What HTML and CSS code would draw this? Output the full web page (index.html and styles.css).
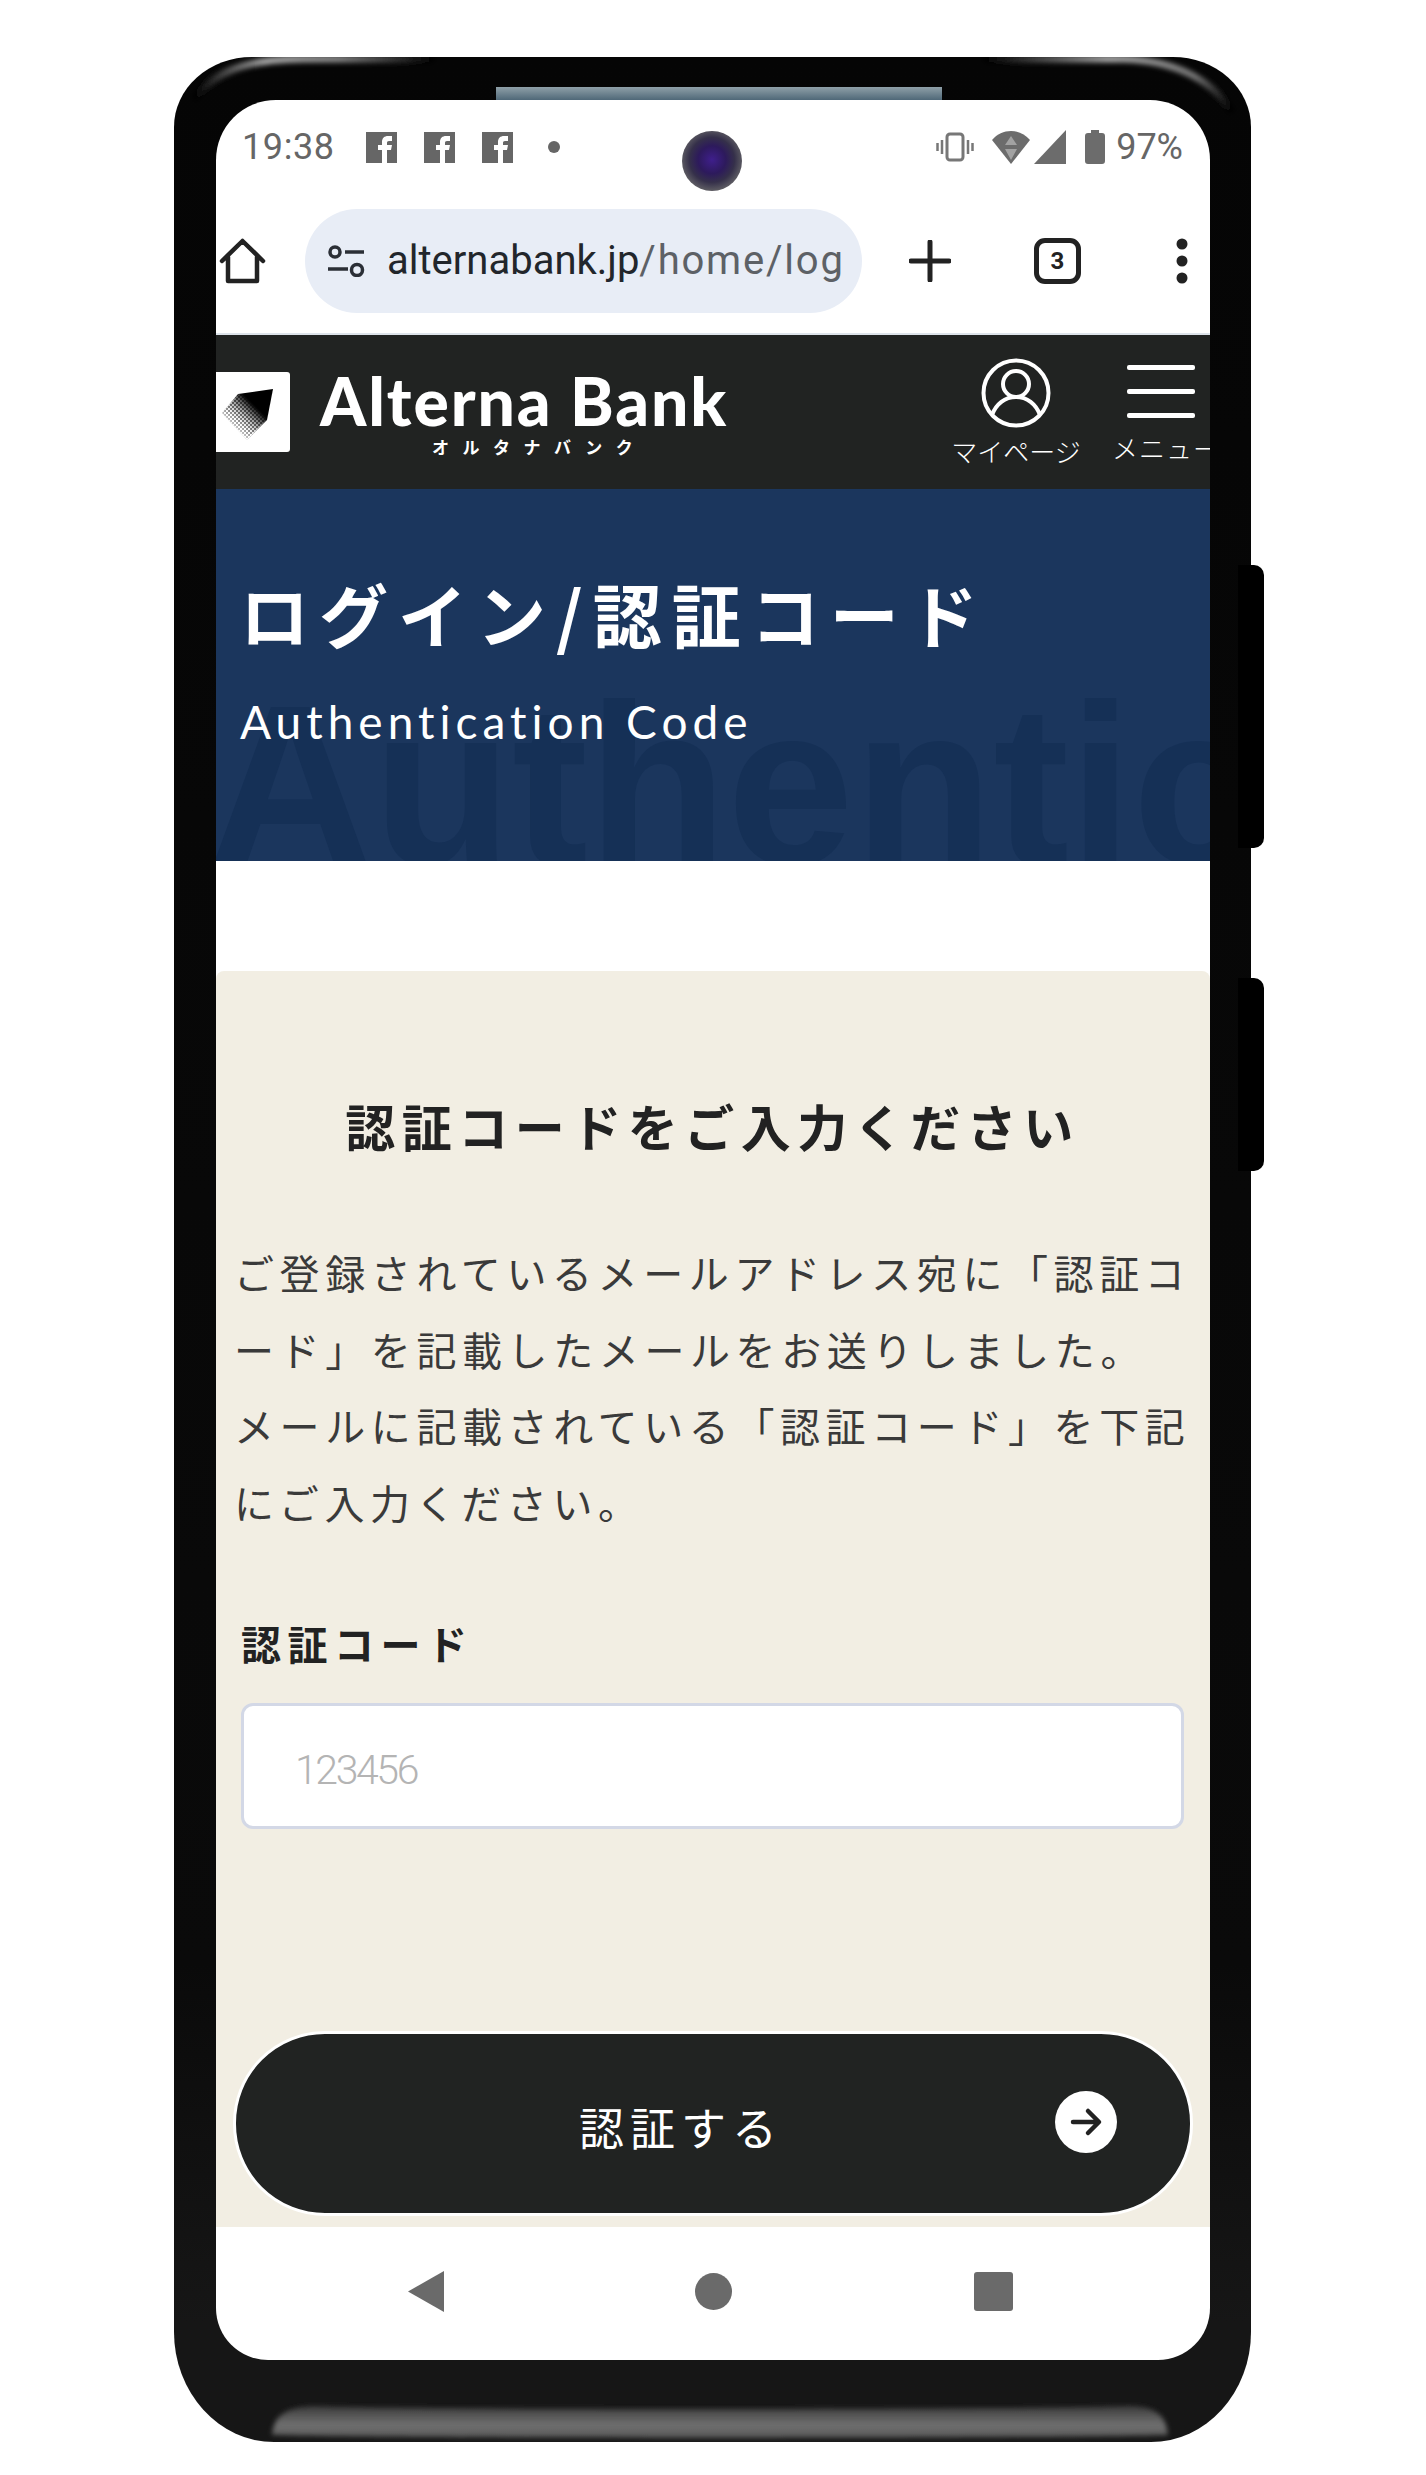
FILE: index.html
```
<!DOCTYPE html>
<html lang="ja">
<head>
<meta charset="utf-8">
<title>Alterna Bank 認証コード</title>
<link rel="stylesheet" href="styles.css">
</head>
<body>
<div class="phone">
  <svg class="sheen" width="1077" height="2385" viewBox="0 0 1077 2385" aria-hidden="true">
    <defs>
      <linearGradient id="sl" x1="0" x2="1" y1="0" y2="0"><stop offset="0" stop-color="#000"/><stop offset=".3" stop-color="#aaa"/><stop offset=".6" stop-color="#888"/><stop offset="1" stop-color="#000"/></linearGradient>
      <linearGradient id="sr" x1="0" x2="1" y1="0" y2="0"><stop offset="0" stop-color="#000"/><stop offset=".5" stop-color="#aaa"/><stop offset=".85" stop-color="#777"/><stop offset="1" stop-color="#000"/></linearGradient>
      <linearGradient id="strip" x1="0" x2="0" y1="0" y2="1"><stop offset="0" stop-color="#8fa0a8"/><stop offset="1" stop-color="#4f6878"/></linearGradient>
      <linearGradient id="band" x1="0" x2="0" y1="0" y2="1"><stop offset="0" stop-color="#3a3a3a"/><stop offset=".6" stop-color="#707070"/><stop offset="1" stop-color="#555"/></linearGradient>
      <filter id="soft"><feGaussianBlur stdDeviation="2.500"/></filter>
    </defs>
    <path d="M20 42C40 15 70 2 130 2H260" fill="none" stroke="url(#sl)" stroke-width="7" filter="url(#soft)"/>
    <path d="M810 2H950C1005 4 1040 25 1058 55" fill="none" stroke="url(#sr)" stroke-width="7" filter="url(#soft)"/>
    <rect x="322" y="30" width="446" height="13" fill="url(#strip)"/>
    <path d="M98 2378C100 2358 112 2350 140 2349C240 2353 860 2353 950 2349C982 2348 992 2358 994 2378C900 2382 180 2382 98 2378Z" fill="url(#band)" filter="url(#soft)"/>
  </svg>
  <div class="btn-side btn-side-a"></div>
  <div class="btn-side btn-side-b"></div>
  <div class="camera"></div>

  <main class="screen">
    <div class="status">
      <span class="status-time">19:38</span>
      <div class="status-apps">
        <svg class="fb" viewBox="0 0 31 31"><rect width="31" height="31" fill="#666"/><path d="M16 31V18h-4v-5h4v-3c0-4 2.500-6 6-6h4v5h-3c-1.500 0-2 .7-2 2v2h5l-1 5h-4v13z" fill="#fff"/></svg>
        <svg class="fb" viewBox="0 0 31 31"><rect width="31" height="31" fill="#666"/><path d="M16 31V18h-4v-5h4v-3c0-4 2.500-6 6-6h4v5h-3c-1.500 0-2 .7-2 2v2h5l-1 5h-4v13z" fill="#fff"/></svg>
        <svg class="fb" viewBox="0 0 31 31"><rect width="31" height="31" fill="#666"/><path d="M16 31V18h-4v-5h4v-3c0-4 2.500-6 6-6h4v5h-3c-1.500 0-2 .7-2 2v2h5l-1 5h-4v13z" fill="#fff"/></svg>
        <span class="status-dot"></span>
      </div>
      <div class="status-right">
        <svg width="38" height="30" viewBox="0 0 38 30"><rect x="11" y="2" width="16" height="26" rx="3" fill="none" stroke="#777" stroke-width="3"/><path d="M6 8v14M1.500 11v8M32 8v14M36.500 11v8" stroke="#777" stroke-width="2.500" fill="none"/></svg>
        <svg class="ic-wifi" width="38" height="34" viewBox="0 0 38 34"><path d="M19 34L0 10C5 4 12 1 19 1s14 3 19 9z" fill="#6c6c6c"/><path d="M19 6l6 9H13zM19 30l-6-11h12z" fill="#a2a2a2"/></svg>
        <svg class="ic-signal" width="32" height="34" viewBox="0 0 32 34"><path d="M32 0v34H0z" fill="#6c6c6c"/></svg>
        <svg class="ic-batt" width="20" height="34" viewBox="0 0 20 34"><path d="M6 0h8v3h3c2 0 3 1 3 3v25c0 2-1 3-3 3H3c-2 0-3-1-3-3V6c0-2 1-3 3-3h3z" fill="#6c6c6c"/></svg>
        <span class="status-pct">97%</span>
      </div>
    </div>

    <div class="urlrow">
      <svg class="ic-home" width="47" height="46" viewBox="0 0 47 46"><path d="M3 23L23.500 3 44 23M9 19v24h29V19" fill="none" stroke="#222" stroke-width="4.500" stroke-linejoin="round" stroke-linecap="round"/></svg>
      <div class="pill">
        <svg width="38" height="32" viewBox="0 0 38 32"><circle cx="8" cy="7" r="5" fill="none" stroke="#2b2f36" stroke-width="3.500"/><path d="M18 7h19M1 24h20" stroke="#2b2f36" stroke-width="3.500"/><circle cx="30" cy="25" r="5.500" fill="none" stroke="#2b2f36" stroke-width="3.500"/></svg>
        <span class="pill-url"><b class="pill-host">alternabank.jp</b><span class="pill-path">/home/log</span></span>
      </div>
      <svg class="ic-plus" width="42" height="42" viewBox="0 0 42 42"><path d="M21 2v38M2 21h38" stroke="#222" stroke-width="5" stroke-linecap="round"/></svg>
      <div class="tabs">3</div>
      <svg class="ic-more" width="12" height="46" viewBox="0 0 12 46"><circle cx="6" cy="6" r="5.500" fill="#222"/><circle cx="6" cy="23" r="5.500" fill="#222"/><circle cx="6" cy="40" r="5.500" fill="#222"/></svg>
    </div>

    <header class="site-head">
      <div class="logo-mark">
        <svg width="74" height="80" viewBox="0 0 74 80">
          <defs>
            <linearGradient id="mk" gradientUnits="userSpaceOnUse" x1="57" y1="17" x2="14" y2="60"><stop offset=".4" stop-color="#000"/><stop offset=".72" stop-color="#777"/><stop offset="1" stop-color="#fff"/></linearGradient>
            <linearGradient id="fd" gradientUnits="userSpaceOnUse" x1="57" y1="17" x2="14" y2="60"><stop offset=".42" stop-color="#000"/><stop offset=".8" stop-color="#fff"/></linearGradient>
            <mask id="fm"><rect width="74" height="80" fill="url(#fd)"/></mask>
            <pattern id="ck" width="4" height="4" patternUnits="userSpaceOnUse"><rect width="2" height="2" fill="#fff"/><rect x="2" y="2" width="2" height="2" fill="#fff"/></pattern>
          </defs>
          <path d="M57 17L51 48 31 68 6 41 22 22z" fill="url(#mk)"/>
          <path d="M57 17L51 48 31 68 6 41 22 22z" fill="url(#ck)" mask="url(#fm)"/>
        </svg>
      </div>
      <div class="brand">
        <div class="brand-name">Alterna Bank</div>
        <div class="brand-kana">オルタナバンク</div>
      </div>
      <div class="head-item head-mypage">
        <svg width="70" height="70" viewBox="0 0 70 70"><circle cx="35" cy="35" r="32.500" fill="none" stroke="#fff" stroke-width="4"/><circle cx="35" cy="26" r="13" fill="none" stroke="#fff" stroke-width="4"/><path d="M11 57c4-11 13-18 24-18s20 7 24 18" fill="none" stroke="#fff" stroke-width="4"/></svg>
        <span class="head-label">マイページ</span>
      </div>
      <div class="head-item head-menu">
        <div class="bars"><i></i><i></i><i></i></div>
        <span class="head-label">メニュー</span>
      </div>
    </header>

    <section class="hero">
      <div class="hero-bg">Authentication</div>
      <h1 class="hero-title">ログイン/認証コード</h1>
      <p class="hero-sub">Authentication Code</p>
    </section>

    <section class="panel">
      <h2 class="panel-title">認証コードをご入力ください</h2>
      <p class="panel-text">ご登録されているメールアドレス宛に「認証コ<br>ード」を記載したメールをお送りしました。<br>メールに記載されている「認証コード」を下記<br>にご入力ください。</p>
      <label class="field-label" for="code">認証コード</label>
      <input class="field-input" id="code" type="text" placeholder="123456">
      <button class="submit" type="button">
        <span class="submit-text">認証する</span>
        <svg width="62" height="62" viewBox="0 0 62 62"><circle cx="31" cy="31" r="31" fill="#fff"/><path d="M18 31h25M33 20l11 11-11 11" fill="none" stroke="#222" stroke-width="4.500" stroke-linecap="round" stroke-linejoin="round"/></svg>
      </button>
    </section>

    <nav class="sysnav">
      <svg width="36" height="41" viewBox="0 0 36 41"><path d="M36 0v41L0 20.500z" fill="#6a6a6a"/></svg>
      <svg width="37" height="37" viewBox="0 0 37 37"><circle cx="18.500" cy="18.500" r="18.500" fill="#6a6a6a"/></svg>
      <svg width="39" height="39" viewBox="0 0 39 39"><rect width="39" height="39" rx="3" fill="#6a6a6a"/></svg>
    </nav>
  </main>
</div>
</body>
</html>
```
FILE: styles.css
```
* { box-sizing: border-box; }
html, body { margin: 0; padding: 0; background: #fff; }
body {
  width: 1426px;
  height: 2475px;
  overflow: hidden;
  font-family: "Noto Sans CJK JP", "Noto Sans", sans-serif;
  padding: 57px 0 0 174px;
}

.phone {
  position: relative;
  width: 1077px;
  height: 2385px;
  padding: 43px 41px 82px 42px;
  background: linear-gradient(#050505 0, #0a0a0a 80%, #161616 95%);
  border-radius: 78px 78px 100px 100px / 70px 70px 110px 110px;
}
.sheen { position: absolute; left: 0; top: 0; }
.btn-side { position: absolute; right: -13px; width: 26px; background: #000; border-radius: 0 10px 10px 0; }
.btn-side-a { top: 508px; height: 283px; }
.btn-side-b { top: 921px; height: 193px; }
.camera {
  position: absolute;
  z-index: 2;
  left: 508px;
  top: 74px;
  width: 60px;
  height: 60px;
  border-radius: 50%;
  background: radial-gradient(circle at 50% 48%, #3f1f8c 0, #2d1a5c 32%, #35304a 52%, #6b6b6b 78%, #bdbdbd 100%);
}

.screen {
  position: relative;
  height: 2260px;
  background: #fff;
  border-radius: 60px 60px 52px 52px;
  overflow: hidden;
  display: flex;
  flex-direction: column;
}

.status {
  height: 109px;
  flex: none;
  padding: 27px 27px 0 26px;
  display: flex;
  align-items: flex-start;
  color: #666;
  font-family: Roboto, sans-serif;
  font-size: 36px;
  line-height: 40px;
}
.status-time { width: 124px; letter-spacing: .6px; }
.status-apps { display: flex; align-items: center; gap: 27px; height: 40px; }
.fb { width: 31px; height: 31px; display: block; }
.status-dot { width: 12px; height: 12px; border-radius: 50%; background: #666; margin-left: 8px; }
.status-right { margin-left: auto; display: flex; align-items: center; height: 40px; }
.ic-wifi { margin-left: 18px; }
.ic-signal { margin-left: 4px; }
.ic-batt { margin-left: 19px; }
.status-pct { margin-left: 11px; }

.urlrow {
  height: 126px;
  flex: none;
  display: flex;
  align-items: flex-start;
  border-bottom: 2px solid #dde3ea;
}
.ic-home { margin: 29px 0 0 3px; flex: none; }
.pill {
  width: 557px;
  height: 104px;
  margin-left: 39px;
  flex: none;
  border-radius: 52px;
  background: #e8edf6;
  display: flex;
  align-items: center;
  padding: 0 17px 0 22px;
  gap: 22px;
}
.pill svg { flex: none; }
.pill-url {
  font-family: Roboto, sans-serif;
  font-size: 40px;
  line-height: 50px;
  white-space: nowrap;
}
.pill-host { font-weight: 400; color: #22262b; }
.pill-path { color: #5d6166; letter-spacing: 1.800px; }
.ic-plus { margin: 31px 0 0 47px; flex: none; }
.tabs {
  width: 47px;
  height: 46px;
  margin: 29px 0 0 83px;
  flex: none;
  border: 5px solid #222;
  border-radius: 11px;
  font: 700 24px/36px Roboto, sans-serif;
  color: #222;
  text-align: center;
}
.ic-more { margin: 29px 0 0 95px; flex: none; }

.site-head {
  height: 154px;
  flex: none;
  position: relative;
  background: #212322;
  color: #fff;
  display: flex;
  align-items: flex-start;
  overflow: hidden;
}
.logo-mark {
  width: 74px;
  height: 80px;
  margin-top: 37px;
  flex: none;
  background: #fff;
  border-radius: 0 3px 3px 0;
}
.logo-mark svg { display: block; }
.brand { margin: 33px 0 0 30px; width: 420px; flex: none; }
.brand-name {
  font-family: Lato, sans-serif;
  font-weight: 900;
  font-size: 66px;
  line-height: 66px;
  letter-spacing: 1.900px;
  white-space: nowrap;
}
.brand-kana {
  font-size: 17px;
  font-weight: 700;
  line-height: 22px;
  letter-spacing: 13.500px;
  margin: 2px 0 0 112px;
  white-space: nowrap;
}
.head-item { position: absolute; top: 23px; display: flex; flex-direction: column; align-items: center; }
.head-mypage { left: 730px; width: 140px; }
.head-menu { left: 896px; width: 98px; align-items: flex-start; overflow: hidden; }
.head-label { font-size: 26px; line-height: 34px; font-weight: 300; white-space: nowrap; margin-top: 6px; }
.head-menu .head-label { letter-spacing: 1px; margin-top: 13px; }
.bars { display: flex; flex-direction: column; gap: 19px; margin-left: 15px; margin-top: 7px; }
.bars i { display: block; width: 68px; height: 5px; border-radius: 2px; background: #fff; }

.hero {
  height: 372px;
  flex: none;
  position: relative;
  background: #1b365d;
  color: #fff;
  overflow: hidden;
  padding: 82px 0 0 24px;
}
.hero-bg {
  position: absolute;
  left: -8px;
  top: 182px;
  font-family: "Liberation Sans", sans-serif;
  font-weight: 700;
  font-size: 228px;
  line-height: 228px;
  color: #153056;
  white-space: nowrap;
}
.hero-title {
  position: relative;
  margin: 0;
  font-size: 69px;
  line-height: 84px;
  font-weight: 700;
  letter-spacing: 10px;
  white-space: nowrap;
}
.hero-sub {
  position: relative;
  margin: 39px 0 0 0;
  font-family: Lato, sans-serif;
  font-size: 46px;
  line-height: 56px;
  letter-spacing: 5px;
}

.panel {
  margin-top: 110px;
  height: 1256px;
  flex: none;
  background: #f2eee3;
  border-radius: 8px 8px 0 0;
  padding: 124px 26px 0 25px;
  display: flex;
  flex-direction: column;
  align-items: flex-start;
}
.panel-title {
  margin: 0;
  width: 100%;
  text-align: center;
  font-size: 50px;
  line-height: 60px;
  font-weight: 700;
  letter-spacing: 6.500px;
  color: #222;
  white-space: nowrap;
}
.panel-text {
  margin: 79px 0 0 -7px;
  font-size: 40px;
  line-height: 76.500px;
  letter-spacing: 5.600px;
  font-weight: 400;
  color: #3a3a3a;
  white-space: nowrap;
}
.field-label {
  margin-top: 78px;
  font-size: 40px;
  line-height: 50px;
  font-weight: 700;
  letter-spacing: 6.500px;
  color: #222;
}
.field-input {
  margin-top: 35px;
  width: 943px;
  height: 126px;
  flex: none;
  padding: 8px 0 0 51px;
  border: 3px solid #d3d8e6;
  border-radius: 12px;
  background: #fff;
  font-family: Roboto, sans-serif;
  font-weight: 300;
  font-size: 41px;
  letter-spacing: -2.400px;
  outline: none;
}
.field-input::placeholder { color: #b4b4b4; opacity: 1; }
.submit {
  margin: 202px 0 0 -8px;
  width: 960px;
  height: 185px;
  flex: none;
  border: 3px solid #fff;
  border-radius: 92px;
  background: #212322;
  color: #fff;
  display: flex;
  align-items: center;
  padding: 0 73px 0 343px;
  font-family: inherit;
}
.submit svg { margin-left: auto; flex: none; margin-top: -4px; }
.submit-text { font-size: 45px; letter-spacing: 6px; font-weight: 400; margin-top: 6px; }

.sysnav {
  flex: 1;
  position: relative;
  display: flex;
  align-items: center;
  justify-content: flex-start;
  padding: 0 0 5px 192px;
}
.sysnav svg:nth-child(2) { margin-left: 251px; }
.sysnav svg:nth-child(3) { margin-left: 242px; }
```
